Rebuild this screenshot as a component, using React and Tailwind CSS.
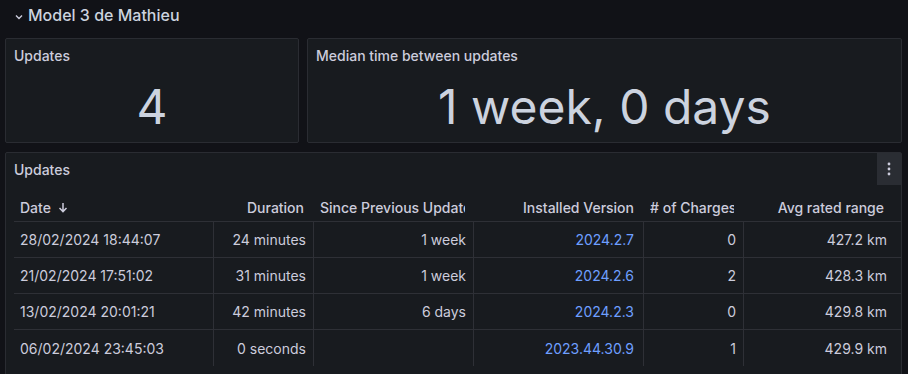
import React from "react";

const rows = [
  { date: "28/02/2024 18:44:07", duration: "24 minutes", since: "1 week", version: "2024.2.7", charges: "0", range: "427.2 km" },
  { date: "21/02/2024 17:51:02", duration: "31 minutes", since: "1 week", version: "2024.2.6", charges: "2", range: "428.3 km" },
  { date: "13/02/2024 20:01:21", duration: "42 minutes", since: "6 days", version: "2024.2.3", charges: "0", range: "429.8 km" },
  { date: "06/02/2024 23:45:03", duration: "0 seconds", since: "", version: "2023.44.30.9", charges: "1", range: "429.9 km" },
];

const cols = "grid grid-cols-[199px_100px_160px_170px_100px_151px]";

const StatPanel = ({ title, value, className }) => (
  <div className={`flex flex-col h-[105px] bg-[#181b1f] border border-[#2a2c32] rounded-[2px] ${className}`}>
    <div className="h-[32px] flex items-center px-2 text-[14px] font-medium text-[#ccccdc]">{title}</div>
    <div className="flex-1 flex items-center justify-center pt-[1px] text-[48px] leading-none text-[#ccd3df]">
      {value}
    </div>
  </div>
);

export default function App() {
  return (
    <div className="w-[908px] h-[374px] overflow-hidden bg-[#111217] font-['Inter',sans-serif] text-[#ccccdc]">
      <div className="h-[31px] flex items-center pl-[15px] gap-[5px] pb-[1px]">
        <svg width="8" height="6" viewBox="0 0 8 6" className="mt-[3px]">
          <path d="M1 1.5 L4 4.5 L7 1.5" stroke="#ccccdc" strokeWidth="1.4" fill="none" />
        </svg>
        <span className="text-[16px] font-medium text-[#ccd3df]">Model 3 de Mathieu</span>
      </div>

      <div className="flex gap-2 pl-[5px] pr-[6px] mt-[7px]">
        <StatPanel title="Updates" value="4" className="w-[294px]" />
        <StatPanel title="Median time between updates" value="1 week, 0 days" className="flex-1" />
      </div>

      <div className="mt-[9px] ml-[5px] mr-[6px] h-[240px] bg-[#181b1f] border border-[#2a2c32] rounded-[2px]">
        <div className="h-[32px] flex items-center justify-between pl-2">
          <span className="text-[14px] font-medium">Updates</span>
          <button className="w-[24px] h-[32px] bg-[#2a2d33] flex items-center justify-center">
            <svg width="4" height="14" viewBox="0 0 4 14">
              <circle cx="2" cy="2" r="1.4" fill="#ccccdc" />
              <circle cx="2" cy="7" r="1.4" fill="#ccccdc" />
              <circle cx="2" cy="12" r="1.4" fill="#ccccdc" />
            </svg>
          </button>
        </div>
        <div className="pl-2 pt-2 text-[14px]">
          <div className={`${cols} h-[29px] border-b border-[#2e3036] font-medium items-center`}>
            <div className="px-[6px] flex items-center gap-[7px]">
              Date
              <svg width="10" height="11" viewBox="0 0 10 11">
                <path d="M5 1 V9.5 M1.5 6 L5 9.6 L8.5 6" stroke="#ccccdc" strokeWidth="1.5" fill="none" />
              </svg>
            </div>
            <div className="px-[9px] text-right">Duration</div>
            <div className="pl-[7px] pr-[8px]">
              <div className="overflow-hidden whitespace-nowrap">Since Previous Update</div>
            </div>
            <div className="px-[9px] text-right">Installed Version</div>
            <div className="pl-[7px] pr-[9px]">
              <div className="overflow-hidden whitespace-nowrap">#&nbsp;of Charges</div>
            </div>
            <div className="pl-2 pr-[10px] text-right">Avg rated range</div>
          </div>
          {rows.map((r, i) => (
            <div
              key={i}
              className={`${cols} h-[36px] items-stretch ${i < rows.length - 1 ? "border-b border-[#2e3036]" : ""}`}
            >
              <div className="px-[6px] flex items-center">{r.date}</div>
              <div className="px-[7px] flex items-center justify-end border-l border-[#2e3036]">{r.duration}</div>
              <div className="px-[7px] flex items-center justify-end border-l border-[#2e3036]">{r.since}</div>
              <div className="px-[9px] flex items-center justify-end border-l border-[#2e3036] text-[#6e9fff]">{r.version}</div>
              <div className="px-[7px] flex items-center justify-end border-l border-[#2e3036]">{r.charges}</div>
              <div className="px-[7px] flex items-center justify-end border-l border-[#2e3036]">{r.range}</div>
            </div>
          ))}
        </div>
      </div>
    </div>
  );
}
